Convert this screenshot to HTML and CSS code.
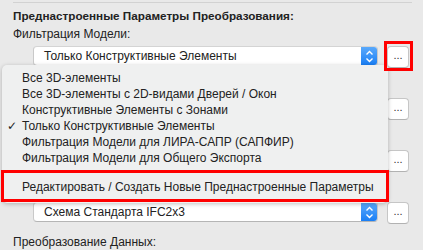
FILE: index.html
```html
<!DOCTYPE html>
<html lang="ru">
<head>
    <meta charset="UTF-8">
    <title>Преднастроенные Параметры Преобразования</title>
    <link rel="stylesheet" href="styles.css">
</head>
<body>
    <div class="panel">
        <div class="top-line"></div>
        <h2 class="section-title">Преднастроенные Параметры Преобразования:</h2>

        <div class="field">
            <label class="field-label">Фильтрация Модели:</label>
            <div class="field-row">
                <div class="select">
                    <span class="select-text">Только Конструктивные Элементы</span>
                    <span class="select-arrow">
                        <svg width="9" height="13" viewBox="0 0 9 13"><path d="M1.5 4.5 L4.5 1.5 L7.5 4.5 M1.5 8.5 L4.5 11.5 L7.5 8.5" fill="none" stroke="#fff" stroke-width="1.4"/></svg>
                    </span>
                </div>
                <button class="more-button">...</button>
            </div>
        </div>

        <!-- поля под выпадающим меню -->
        <div class="field">
            <label class="field-label"></label>
            <div class="field-row">
                <div class="select">
                    <span class="select-text"></span>
                    <span class="select-arrow"></span>
                </div>
                <button class="more-button">...</button>
            </div>
        </div>

        <div class="field">
            <label class="field-label"></label>
            <div class="field-row">
                <div class="select">
                    <span class="select-text"></span>
                    <span class="select-arrow"></span>
                </div>
                <button class="more-button">...</button>
            </div>
        </div>

        <div class="field">
            <label class="field-label"></label>
            <div class="field-row">
                <div class="select">
                    <span class="select-text">Схема Стандарта IFC2x3</span>
                    <span class="select-arrow">
                        <svg width="9" height="13" viewBox="0 0 9 13"><path d="M1.5 4.5 L4.5 1.5 L7.5 4.5 M1.5 8.5 L4.5 11.5 L7.5 8.5" fill="none" stroke="#fff" stroke-width="1.4"/></svg>
                    </span>
                </div>
                <button class="more-button">...</button>
            </div>
        </div>

        <div class="field last">
            <label class="field-label">Преобразование Данных:</label>
        </div>
    </div>

    <!-- выпадающее меню фильтрации -->
    <div class="dropdown">
        <div class="dropdown-item">Все 3D-элементы</div>
        <div class="dropdown-item">Все 3D-элементы с 2D-видами Дверей / Окон</div>
        <div class="dropdown-item">Конструктивные Элементы с Зонами</div>
        <div class="dropdown-item checked">Только Конструктивные Элементы</div>
        <div class="dropdown-item">Фильтрация Модели для ЛИРА-САПР (САПФИР)</div>
        <div class="dropdown-item">Фильтрация Модели для Общего Экспорта</div>
        <div class="dropdown-separator"></div>
        <div class="dropdown-item">Редактировать / Создать Новые Преднастроенные Параметры</div>
    </div>

    <!-- красные рамки выделения -->
    <div class="highlight highlight-button"></div>
    <div class="highlight highlight-edit"></div>
</body>
</html>
```

FILE: styles.css
```css
body {
    font-family: 'Liberation Sans', Arial, sans-serif;
    font-size: 12px;
    color: #222;
    background-color: #e9e9e9;
    margin: 0;
    padding: 0;
    width: 423px;
    height: 250px;
    overflow: hidden;
    position: relative;
}

.panel {
    padding: 2px 14px 0 13px;
}

.top-line {
    border-top: 1px solid #d2d2d2;
    margin-right: -3px;
}

.section-title {
    font-size: 11.7px;
    font-weight: bold;
    margin: 0;
    padding-top: 4px;
    height: 19px;
    line-height: 18px;
}

.field {
    height: 52px;
}

.field.last {
    height: auto;
}

.field-label {
    display: block;
    height: 17px;
    line-height: 17px;
    margin-bottom: 3px;
}

.field-row {
    display: flex;
    align-items: flex-start;
    gap: 9px;
    padding-left: 20px;
}

.select {
    flex: 1;
    height: 20px;
    display: flex;
    background-color: white;
    border: 1px solid #c9c9c9;
    border-top-color: #d4d4d4;
    border-bottom-color: #b5b5b5;
    border-radius: 4px;
    box-sizing: border-box;
    overflow: hidden;
}

.select-text {
    flex: 1;
    padding-left: 10px;
    line-height: 18px;
    white-space: nowrap;
}

.select-arrow {
    width: 16px;
    display: flex;
    align-items: center;
    justify-content: center;
    background: linear-gradient(#5aa9fb, #1a7ff5);
}

.more-button {
    width: 22px;
    height: 22px;
    padding: 0 0 4px 0;
    font-family: 'Liberation Sans', Arial, sans-serif;
    font-size: 11px;
    color: #333;
    background-color: white;
    border: 1px solid #c6c6c6;
    border-bottom-color: #b2b2b2;
    border-radius: 4px;
}

/* выпадающее меню */
.dropdown {
    position: absolute;
    left: 2px;
    top: 65px;
    width: 386px;
    height: 138px;
    padding-top: 5px;
    box-sizing: border-box;
    background-color: #eff0f0;
    border-radius: 5px;
    box-shadow: 0 1px 4px rgba(0, 0, 0, 0.25);
}

.dropdown-item {
    height: 16px;
    line-height: 16px;
    padding-left: 20px;
    white-space: nowrap;
    position: relative;
}

.dropdown-item.checked::before {
    content: "✓";
    position: absolute;
    left: 5px;
    font-family: 'DejaVu Sans', sans-serif;
    font-weight: bold;
    font-size: 12px;
}

.dropdown-separator {
    height: 1px;
    margin: 6px 0 6px 0;
    background-color: #d8d8d8;
}

/* красные рамки */
.highlight {
    position: absolute;
    border: 3px solid #ff0000;
    box-sizing: border-box;
}

.highlight-button {
    left: 384px;
    top: 41px;
    width: 29px;
    height: 30px;
}

.highlight-edit {
    left: 1px;
    top: 170px;
    width: 388px;
    height: 32px;
}
```
